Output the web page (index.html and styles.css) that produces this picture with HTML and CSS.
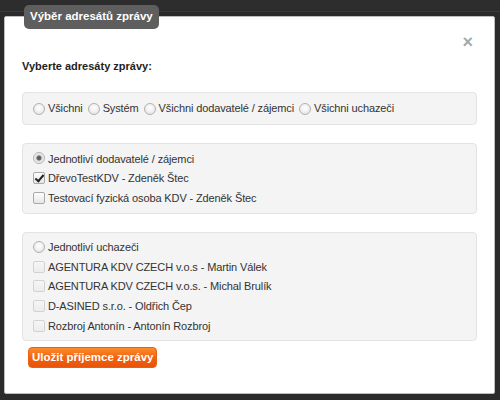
FILE: index.html
```html
<!DOCTYPE html>
<html lang="cs">
<head>
<meta charset="utf-8">
<link rel="stylesheet" href="styles.css">
</head>
<body>
<div class="backdrop">
  <div class="modal">
    <div class="tab">Výběr adresátů zprávy</div>
    <div class="close">×</div>
    <p class="lead">Vyberte adresáty zprávy:</p>
    <div class="well well-inline">
      <label class="opt"><input type="radio" name="g"> Všichni</label>
      <label class="opt"><input type="radio" name="g"> Systém</label>
      <label class="opt"><input type="radio" name="g"> Všichni dodavatelé / zájemci</label>
      <label class="opt"><input type="radio" name="g"> Všichni uchazeči</label>
    </div>
    <div class="well">
      <label class="row"><input type="radio" name="g" checked> Jednotliví dodavatelé / zájemci</label>
      <label class="row"><input type="checkbox" checked> DřevoTestKDV - Zdeněk Štec</label>
      <label class="row"><input type="checkbox"> Testovací fyzická osoba KDV - Zdeněk Štec</label>
    </div>
    <div class="well well-lg">
      <label class="row"><input type="radio" name="g"> Jednotliví uchazeči</label>
      <label class="row"><input type="checkbox" disabled> AGENTURA KDV CZECH v.o.s - Martin Válek</label>
      <label class="row"><input type="checkbox" disabled> AGENTURA KDV CZECH v.o.s. - Michal Brulík</label>
      <label class="row"><input type="checkbox" disabled> D-ASINED s.r.o. - Oldřich Čep</label>
      <label class="row"><input type="checkbox" disabled> Rozbroj Antonín - Antonín Rozbroj</label>
    </div>
    <button class="save">Uložit příjemce zprávy</button>
  </div>
</div>
</body>
</html>
```
FILE: styles.css
```css
html, body {
  margin: 0;
  padding: 0;
  background: #2b2b2b;
  font-family: "Liberation Sans", Arial, sans-serif;
  font-size: 11px;
  color: #333;
}
.backdrop {
  width: 500px;
  height: 400px;
  box-sizing: border-box;
  padding: 16px 4px 0 4px;
  background: linear-gradient(#2d2d2d 0, #2d2d2d 11px, #3a3a3a 11px, #3a3a3a 12px, #2b2b2b 12px);
}
.modal {
  position: relative;
  width: 491px;
  height: 378px;
  box-sizing: border-box;
  background: #fff;
  border: 1px solid #bdbdbd;
  border-radius: 2px;
  padding: 1px 17px 0 17px;
}
.tab {
  position: absolute;
  left: 19px;
  top: -12px;
  height: 24px;
  line-height: 22px;
  padding: 0 6px 0 6px;
  background: #5e5e5e;
  color: #fff;
  font-weight: bold;
  font-size: 11.5px;
  border-radius: 5px;
}
.close {
  position: absolute;
  right: 21px;
  top: 16px;
  font-size: 18px;
  font-weight: bold;
  color: #a8a8a8;
  line-height: 18px;
}
.lead {
  margin: 41px 0 0 0;
  font-weight: bold;
  font-size: 11px;
  color: #222;
  line-height: 14px;
}
.well {
  background: #f4f4f4;
  border: 1px solid #e3e3e3;
  border-radius: 4px;
  padding: 5px 9px;
  margin-top: 18px;
  letter-spacing: -0.12px;
}
.lead + .well {
  margin-top: 19px;
  padding: 6px 9px 6px 9px;
  line-height: 19px;
}
.well-inline {
  display: flex;
  flex-wrap: wrap;
  column-gap: 4px;
}
.opt, .row {
  display: flex;
  align-items: center;
  white-space: nowrap;
  color: #333;
}
.row {
  height: 19.5px;
}
.well-lg .row {
  height: 19.6px;
}
input {
  -webkit-appearance: none;
  appearance: none;
  margin: 0 3px 0 1px;
  flex: none;
  position: relative;
}
input[type=radio] {
  width: 12px;
  height: 12px;
  border-radius: 50%;
  border: 1px solid #b2b2b2;
  background: radial-gradient(circle at 50% 40%, #fff 0, #f2f2f2 45%, #dcdcdc 100%);
  box-sizing: border-box;
}
input[type=radio]:checked {
  background: radial-gradient(circle, #555 0, #6a6a6a 2px, #d8d8d8 3px, #f4f4f4 5px);
}
input[type=checkbox] {
  width: 12px;
  height: 12px;
  border-radius: 2px;
  border: 1px solid #a9a9a9;
  background: linear-gradient(#fdfdfd, #e6e6e6);
  box-sizing: border-box;
}
input[type=checkbox]:disabled {
  border-color: #d2d2d2;
  background: linear-gradient(#f6f6f6, #ececec);
}
input[type=checkbox]:checked::after {
  content: "";
  position: absolute;
  left: 3px;
  top: 0px;
  width: 3px;
  height: 7px;
  border: solid #222;
  border-width: 0 2px 2px 0;
  transform: rotate(40deg);
}
.row input[type=radio] {
  margin-top: -1px;
}
.save {
  display: block;
  margin: 6px 0 0 6px;
  height: 21px;
  padding: 0 3px;
  border: 1px solid #e9600f;
  border-radius: 4px;
  background: linear-gradient(#fb8c2c, #f0600e 55%, #e8540a);
  color: #fff;
  font-family: "Liberation Sans", Arial, sans-serif;
  font-weight: bold;
  font-size: 11.5px;
  line-height: 19px;
}
```
